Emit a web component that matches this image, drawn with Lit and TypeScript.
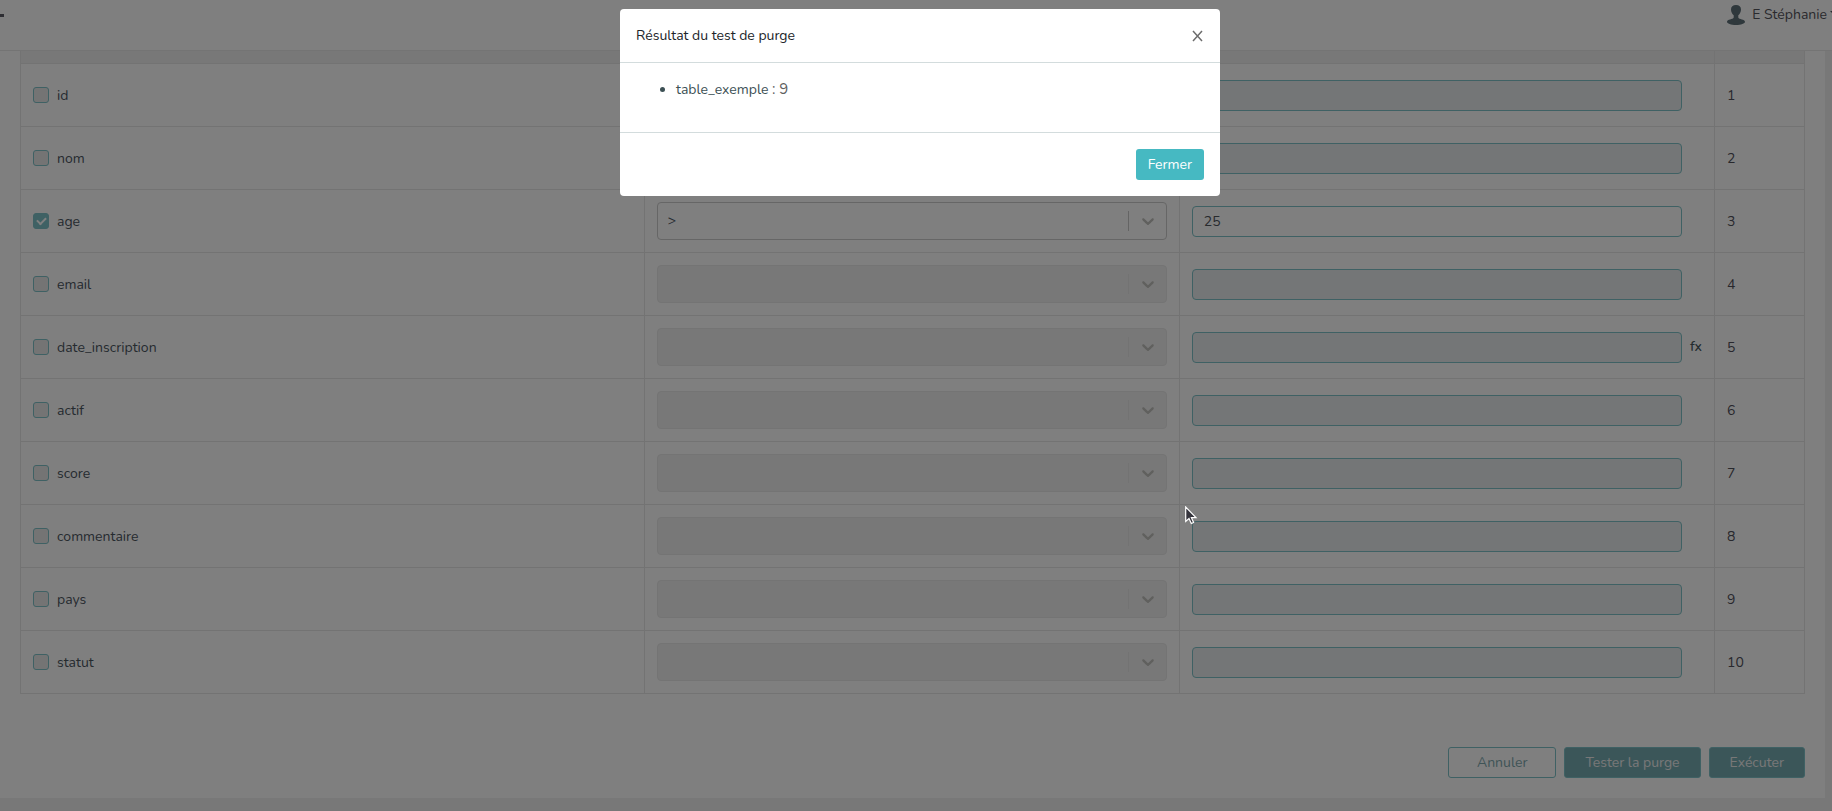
import { LitElement, html, css, svg } from "lit";
import { customElement, property, state } from "lit/decorators.js";

interface Champ {
  nom: string;
  actif?: boolean;
  operateur?: string;
  valeur?: string;
  fonction?: boolean;
}

const CHAMPS: Champ[] = [
  { nom: "id" },
  { nom: "nom" },
  { nom: "age", actif: true, operateur: ">", valeur: "25" },
  { nom: "email" },
  { nom: "date_inscription", fonction: true },
  { nom: "actif" },
  { nom: "score" },
  { nom: "commentaire" },
  { nom: "pays" },
  { nom: "statut" },
];

const base = css`
  * {
    box-sizing: border-box;
  }
  button,
  input,
  select {
    font: inherit;
    margin: 0;
  }
`;

@customElement("purge-table")
class PurgeTable extends LitElement {
  @property({ attribute: false }) champs: Champ[] = [];

  static styles = [
    base,
    css`
      :host {
        display: block;
      }
      .table {
        width: 100%;
        table-layout: fixed;
        border-collapse: collapse;
      }
      .col-op,
      .col-value {
        width: 30%;
      }
      .col-order {
        width: 90px;
      }
      th {
        height: 12px;
        padding: 0;
        background: #f0f0f0;
        border: 1px solid #e6e6e6;
        border-top: 0;
        border-bottom: 1px dotted #b4b4b4;
      }
      td {
        height: 63px;
        padding: 1px 12px 0;
        border: 1px solid #e6e6e6;
        color: #50505a;
      }
      .cell-op {
        padding: 0 12px;
      }
      .name {
        display: flex;
        align-items: center;
        gap: 8px;
        color: #4c565f;
      }
      .check {
        appearance: none;
        flex: none;
        width: 16px;
        height: 16px;
        border: 1px solid #7ec2c8;
        border-radius: 3px;
        background: #e8e8e8;
        display: grid;
        place-content: center;
      }
      .check:checked {
        background: #7ec2c8;
      }
      .check:checked::before {
        content: "";
        width: 7px;
        height: 4px;
        border-left: 2px solid #fff;
        border-bottom: 2px solid #fff;
        transform: translateY(-1px) rotate(-45deg);
      }
      .picker {
        display: grid;
        align-items: center;
      }
      .select,
      .indicator {
        grid-area: 1 / 1;
      }
      .select {
        appearance: none;
        width: 100%;
        height: 38px;
        padding: 0 60px 0 10px;
        border: 1px solid #cccccc;
        border-radius: 4px;
        background: #fff;
        color: #4c565f;
        opacity: 1;
      }
      .select:disabled {
        background: #f0f0f0;
        border-color: #e8e8e8;
      }
      .indicator {
        justify-self: end;
        display: flex;
        align-items: center;
        pointer-events: none;
        color: #c0c0bc;
      }
      .indicator svg {
        display: block;
        margin: 0 9px;
        fill: currentColor;
      }
      .bar {
        width: 1px;
        height: 20px;
        background: #c8c8c8;
      }
      .select:disabled + .indicator .bar {
        background: #e6e6e6;
      }
      .value {
        display: flex;
        align-items: center;
        gap: 8px;
      }
      .input {
        flex: 1;
        min-width: 0;
        height: 31px;
        padding: 0 11px;
        border: 1px solid #7ec2c8;
        border-radius: 4px;
        background: #fff;
        color: #50565d;
      }
      .input:disabled {
        background: #e9ecef;
      }
      .fx {
        width: 12px;
        padding: 0;
        border: 0;
        background: none;
        color: #48585e;
        font-weight: 500;
        line-height: 20px;
      }
      .fx-space {
        width: 12px;
      }
    `,
  ];

  private ligne(c: Champ, i: number) {
    return html`<tr>
      <td>
        <label class="name">
          <input class="check" type="checkbox" .checked=${!!c.actif} />
          <span>${c.nom}</span>
        </label>
      </td>
      <td class="cell-op">
        <div class="picker">
          <select class="select" aria-label="${c.nom}" ?disabled=${!c.actif}>
            <option>${c.operateur ?? ""}</option>
          </select>
          <span class="indicator">
            <span class="bar"></span>
            <svg width="20" height="20" viewBox="0 0 20 20" aria-hidden="true">
              <path
                d="M4.516 7.548c0.436-0.446 1.043-0.481 1.576 0l3.908 3.747 3.908-3.747c0.533-0.481 1.141-0.446 1.574 0 0.436 0.445 0.408 1.197 0 1.615-0.406 0.418-4.695 4.502-4.695 4.502-0.217 0.223-0.502 0.335-0.787 0.335s-0.570-0.112-0.789-0.335c0 0-4.287-4.084-4.695-4.502s-0.436-1.170 0-1.615z"
              />
            </svg>
          </span>
        </div>
      </td>
      <td>
        <div class="value">
          <input class="input" type="text" aria-label="${c.nom}" .value=${c.valeur ?? ""} ?disabled=${!c.actif} />
          ${c.fonction
            ? html`<button class="fx" type="button">fx</button>`
            : html`<span class="fx-space"></span>`}
        </div>
      </td>
      <td>${i + 1}</td>
    </tr>`;
  }

  render() {
    return html`<table class="table">
      <colgroup>
        <col />
        <col class="col-op" />
        <col class="col-value" />
        <col class="col-order" />
      </colgroup>
      <thead>
        <tr>
          <th></th>
          <th></th>
          <th></th>
          <th></th>
        </tr>
      </thead>
      <tbody>
        ${this.champs.map((c, i) => this.ligne(c, i))}
      </tbody>
    </table>`;
  }
}

@customElement("result-dialog")
class ResultDialog extends LitElement {
  static styles = [
    base,
    css`
      :host {
        position: fixed;
        inset: 0;
        display: flex;
        justify-content: center;
        align-items: flex-start;
        padding: 9px 0 9px 8px;
        background: rgba(0, 0, 0, 0.5);
      }
      .dialog {
        width: 600px;
        max-width: 100%;
        border-radius: 4px;
        background: #fff;
      }
      .header {
        display: flex;
        align-items: center;
        justify-content: space-between;
        padding: 16px;
        border-bottom: 1px solid #d3dcdd;
      }
      .title {
        margin: 0;
        font-size: 14px;
        font-weight: 400;
        line-height: 21px;
        color: #212529;
      }
      .close {
        display: flex;
        padding: 0;
        border: 0;
        background: none;
        color: #6c6c6c;
      }
      .body {
        padding: 16px;
        border-bottom: 1px solid #d3dcdd;
        color: #3c5054;
        line-height: 21px;
      }
      .list {
        margin: 0 0 16px;
        padding-left: 40px;
      }
      .count {
        color: #606060;
        font-size: 15px;
      }
      .footer {
        display: flex;
        justify-content: flex-end;
        padding: 16px;
      }
      .primary {
        height: 31px;
        padding: 0 12px;
        border: 0;
        border-radius: 3px;
        background: #46b9c2;
        color: #fff;
      }
    `,
  ];

  private fermer() {
    this.dispatchEvent(new CustomEvent("fermer"));
  }

  render() {
    return html`<section class="dialog" role="dialog" aria-modal="true" aria-labelledby="titre">
      <header class="header">
        <h2 class="title" id="titre">Résultat du test de purge</h2>
        <button class="close" type="button" aria-label="Fermer" @click=${this.fermer}>
          <svg width="12" height="12" viewBox="0 0 12 12" fill="none" stroke="currentColor" stroke-width="1.5">
            <path d="M1 1 10 11M10 1 1 11" />
          </svg>
        </button>
      </header>
      <div class="body">
        <ul class="list">
          <li>table_exemple <span class="count">: 9</span></li>
        </ul>
      </div>
      <footer class="footer">
        <button class="primary" type="button" @click=${this.fermer}>Fermer</button>
      </footer>
    </section>`;
  }
}

@customElement("app-root")
class AppRoot extends LitElement {
  @state() private ouvert = true;

  static styles = [
    base,
    css`
      :host {
        display: block;
        min-height: 100vh;
        overflow: hidden;
        background: #f0f0f0;
        font-family: Nunito, Lato, "Open Sans", sans-serif;
        font-size: 14px;
        line-height: 21px;
      }
      .topbar {
        display: flex;
        justify-content: space-between;
        height: 51px;
        padding-top: 4px;
        background: #fff;
        border-bottom: 1px solid #e9e9e9;
        overflow: hidden;
      }
      .dash {
        width: 4px;
        height: 3px;
        margin-top: 10px;
        background: #5c5c66;
      }
      .user {
        display: flex;
        align-items: center;
        gap: 7px;
        height: 21px;
        margin-right: -6px;
        color: #54545c;
        text-decoration: none;
        white-space: nowrap;
      }
      .user-name {
        display: flex;
        align-items: center;
        gap: 3px;
      }
      .caret {
        margin-bottom: 4px;
        border: 4px solid transparent;
        border-top-color: currentColor;
        border-bottom: 0;
      }
      .card {
        margin-right: 7px;
        padding: 0 20px 20px;
        background: #fff;
      }
      .actions {
        display: flex;
        justify-content: flex-end;
        gap: 8px;
        padding-top: 53px;
      }
      .btn {
        height: 31px;
        padding: 0 20px;
        border: 1px solid #7ec2c8;
        border-radius: 3px;
        background: #76acb2;
        color: #f0f0f0;
      }
      .btn-outline {
        padding: 0 28px;
        background: #fff;
        color: #7ea8ae;
      }
      .pointer {
        position: fixed;
        left: 1185px;
        top: 506px;
        pointer-events: none;
      }
    `,
  ];

  render() {
    return html`
      <header class="topbar">
        <span class="dash"></span>
        <a class="user" href="#">
          <svg width="18" height="20" viewBox="0 0 18 20" fill="#5f7078" aria-hidden="true">
            <path
              d="M9 0C5.800 0 4 1.500 4 4.500c0 2.500 1.200 4.500 2.700 5.700v2.300C6 14.500 0 14.200 0 16.800 0 18.700 4 20 9 20s9-1.300 9-3.200c0-2.600-6-2.300-6.700-4.300v-2.300C12.800 9 14 7 14 4.500 14 1.500 12.200 0 9 0z"
            />
          </svg>
          <span class="user-name">E Stéphanie <span class="caret"></span></span>
        </a>
      </header>
      <main class="card">
        <purge-table .champs=${CHAMPS}></purge-table>
        <div class="actions">
          <button class="btn btn-outline" type="button">Annuler</button>
          <button class="btn" type="button">Tester la purge</button>
          <button class="btn" type="button">Exécuter</button>
        </div>
      </main>
      ${this.ouvert ? html`<result-dialog @fermer=${() => (this.ouvert = false)}></result-dialog>` : ""}
      <svg class="pointer" width="13" height="19" viewBox="0 0 13 19" aria-hidden="true">
        ${svg`<path d="M.7 1v14.500l3.300-3 2.300 5 2.300-1-2.200-4.800h4.600z" fill="#35343c" stroke="#fff" stroke-width="1.200" />`}
      </svg>
    `;
  }
}
